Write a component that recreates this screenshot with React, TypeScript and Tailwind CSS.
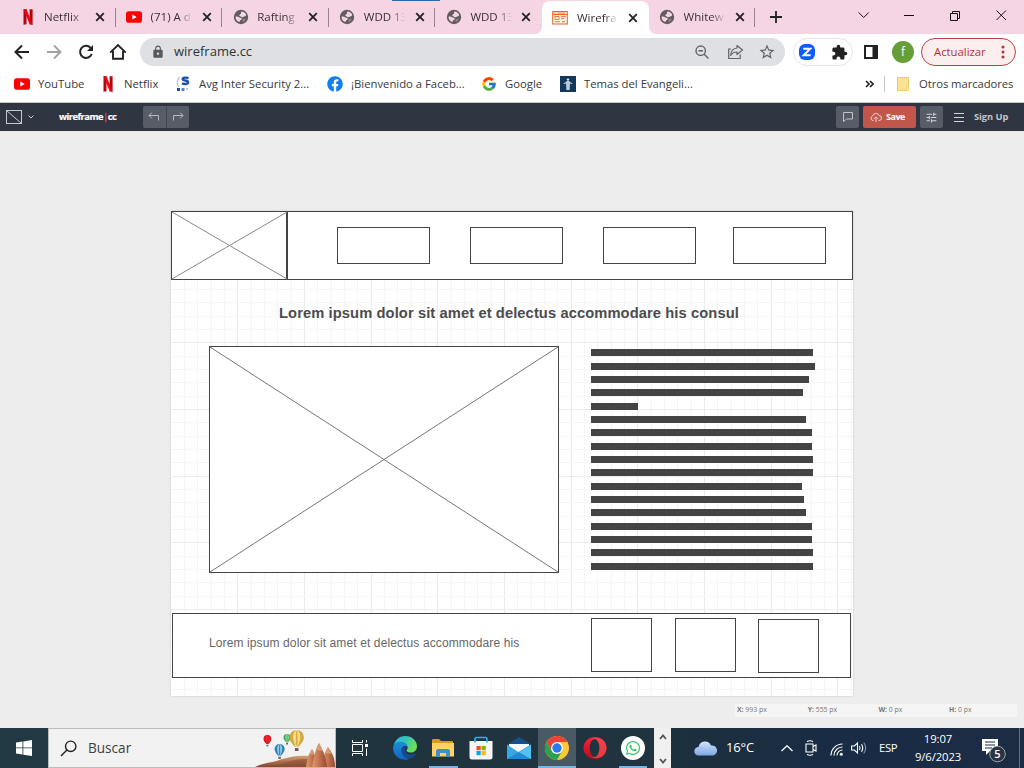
import React from 'react';
import { FcGoogle } from 'react-icons/fc';
import { FaFacebook, FaWhatsapp } from 'react-icons/fa';
import { MdExtension, MdLock, MdStarBorder, MdTune } from 'react-icons/md';

function NetflixIcon() {
  return (
    <svg width="16" height="16" viewBox="0 0 16 16" className="shrink-0">
      <path d="M3.5 0.3h3v15l-3 .4z M9.6 0.3h3v15.4l-3-.4z" fill="#b1060f" />
      <path d="M3.5 0.3h3.1l6 15.4-3-.4z" fill="#e50914" />
    </svg>
  );
}

function YouTubeIcon() {
  return (
    <svg width="16" height="16" viewBox="0 0 16 16" className="shrink-0">
      <rect x="0" y="2.3" width="16" height="11.4" rx="2.8" fill="#f00" />
      <path d="M6.3 5.5v5l4.4-2.5z" fill="#fff" />
    </svg>
  );
}

function GlobeIcon() {
  return (
    <svg width="16" height="16" viewBox="0 0 16 16" className="shrink-0">
      <circle cx="8" cy="8" r="7.200" fill="#625c60" />
      <path d="M8.500 2.600c2 .1 3.800 1.300 4.700 3.100-.2 1-1 1.700-2 1.700-.9.300-1.200 1.100-2.200.9-1-.3-1.200-1.200-2.200-1.400-.8-.3-.6-1.300.2-1.500.8-.2 1-.7 1-1.300 0-.6.100-1.100.5-1.500z" fill="#f5d5e4" />
      <path d="M2.500 7.800c1.300-.6 2.700-.3 3.600.5.800.6 1.900.3 2.500 1 .5.900-.2 1.500-1 1.800-.7.300-.6 1.300-1.200 2C4.100 12.400 2.500 10.500 2.500 7.800z" fill="#f5d5e4" />
      <path d="M9.800 10.300c1.100-.4 2.100-.3 3.100-.5-.5 1.500-1.700 2.700-3.100 3.200-.4-.9-.5-1.900 0-2.700z" fill="#f5d5e4" opacity=".35" />
    </svg>
  );
}

function WireframeIcon() {
  return (
    <svg width="16" height="16" viewBox="0 0 16 16" className="shrink-0" fill="none" stroke="#e2632f">
      <rect x=".7" y="1.500" width="14.600" height="12.500" fill="#fff3e9" strokeWidth="1" />
      <path d="M1 4.500h14" strokeWidth="1.200" />
      <path d="M2 3h1.500M5 3h8" strokeWidth=".8" />
      <rect x="3" y="6.500" width="4" height="3" strokeWidth=".8" />
      <path d="M9 6.700h5M9 8.700h3M3 11.700h5M10 11.700h3" strokeWidth=".9" />
    </svg>
  );
}

function CloseIcon() {
  return (
    <svg width="10" height="10" viewBox="0 0 10 10" className="shrink-0" stroke="#222" strokeWidth="1.800">
      <path d="M1.200 1.200l7.600 7.600M8.800 1.200L1.200 8.800" />
    </svg>
  );
}

type TabProps = { icon: React.ReactNode; title: string; active?: boolean; divider?: boolean };

function Tab({ icon, title, active, divider = true }: TabProps) {
  return (
    <div
      className={
        'relative flex w-[106.600px] shrink-0 items-center pl-[10.500px] ' +
        (active ? 'mt-px h-[33px] rounded-t-[8px] bg-white' : 'h-[34px]')
      }
    >
      {icon}
      <span className="ml-[8.500px] mr-[8.500px] w-[42.500px] overflow-hidden whitespace-nowrap text-[11.500px] text-[#3c3036] [mask-image:linear-gradient(to_right,black_65%,transparent_98%)]">
        {title}
      </span>
      <CloseIcon />
      {divider && <span className="ml-auto h-[19px] w-px bg-[#96848d]" />}
      {active && (
        <>
          <svg className="absolute -left-[7px] bottom-0" width="7" height="7">
            <path d="M7 0v7H0a7 7 0 0 0 7-7z" fill="#fff" />
          </svg>
          <svg className="absolute -right-[7px] bottom-0" width="7" height="7">
            <path d="M0 0v7h7a7 7 0 0 1-7-7z" fill="#fff" />
          </svg>
        </>
      )}
    </div>
  );
}

function TabStrip() {
  return (
    <div className="relative flex h-[34px] items-center bg-[#f5d5e4] pl-[9px]">
      <div className="absolute left-[392px] top-0 h-px w-[48px] bg-[#2b66b5]" />
      <Tab icon={<NetflixIcon />} title="Netflix" />
      <Tab icon={<YouTubeIcon />} title="(71) A d" />
      <Tab icon={<GlobeIcon />} title="Rafting" />
      <Tab icon={<GlobeIcon />} title="WDD 13" />
      <Tab icon={<GlobeIcon />} title="WDD 13" divider={false} />
      <Tab icon={<WireframeIcon />} title="Wirefrar" active divider={false} />
      <Tab icon={<GlobeIcon />} title="Whitewa" />
      <svg className="ml-[15px]" width="12" height="12" stroke="#222" strokeWidth="1.800">
        <path d="M6 0v12M0 6h12" />
      </svg>
      <svg className="ml-auto mr-[17px] mb-[5px]" width="149" height="14" fill="none" stroke="#111" strokeWidth="1">
        <path d="M.7 4.500l5 5 5-5" />
        <path d="M46 7.500h10" />
        <path d="M92.500 5.500h7v7h-7zM94.500 5.500v-2h7v7h-2" />
        <path d="M138.500 2.500l9.500 9.500M148 2.500L138.500 12" />
      </svg>
    </div>
  );
}

function AddressBar() {
  return (
    <div className="flex h-[36px] items-center bg-white">
      <svg className="ml-[14px] shrink-0" width="16" height="16" fill="none" stroke="#222" strokeWidth="2">
        <path d="M15 8H2M8 1.500L1.500 8 8 14.500" />
      </svg>
      <svg className="ml-[16px] shrink-0" width="16" height="16" fill="none" stroke="#a3a3a3" strokeWidth="1.900">
        <path d="M1 8h13M8 1.500L14.500 8 8 14.500" />
      </svg>
      <svg className="ml-[16px] shrink-0" width="16" height="16" fill="none" stroke="#222" strokeWidth="2">
        <path d="M13.700 10A6 6 0 1 1 12.500 3.800" />
        <path d="M15 1v6H9z" fill="#222" stroke="none" />
      </svg>
      <svg className="ml-[15px] shrink-0" width="18" height="18" viewBox="0 0 18 18" fill="none" stroke="#222" strokeWidth="1.900">
        <path d="M1.200 9.600L9 2l7.800 7.600M4 8v7.800h10V8" />
      </svg>
      <div className="ml-[13px] flex h-[28px] w-[645px] shrink-0 items-center rounded-full bg-[#dfe0e3]">
        <MdLock className="ml-[11px]" size={14} color="#55585c" />
        <span className="ml-[9px] text-[13px] text-[#303236]">wireframe.cc</span>
        <svg className="ml-auto" width="14" height="14" fill="none" stroke="#606367" strokeWidth="1.400">
          <circle cx="5.700" cy="5.700" r="4.700" />
          <path d="M9.200 9.200l4.300 4.300M3.500 5.700h4.400" />
        </svg>
        <svg className="ml-[18px]" width="17" height="16" viewBox="0 0 17 16" fill="none" stroke="#606367" strokeWidth="1.200">
          <path d="M4 5H1.700v9.500h11.500v-4" />
          <path d="M10 1.500L15.500 6 10 10.500V8C7 8 5 9 3.700 11.500 4 7 6.500 4.300 10 4z" strokeLinejoin="round" />
        </svg>
        <MdStarBorder className="ml-[14px] mr-[9px]" size={18} color="#606367" />
      </div>
      <div className="ml-[8px] flex h-[28px] w-[60px] shrink-0 items-center rounded-full border border-[#e4e5e8] pl-[5px]">
        <svg width="16" height="16" viewBox="0 0 16 16">
          <rect width="16" height="16" rx="6" fill="#0b5cff" />
          <path d="M4.200 4.700h7L4.700 11.300h7" fill="none" stroke="#fff" strokeWidth="2" />
        </svg>
        <MdExtension className="ml-[16px]" size={17} color="#222" />
      </div>
      <svg className="ml-[11px] shrink-0" width="14" height="14">
        <rect x="1" y="1" width="12" height="12" fill="#fff" stroke="#222" strokeWidth="2" />
        <rect x="8.500" y="1" width="5" height="12" fill="#222" />
      </svg>
      <div className="ml-[14px] flex size-[22px] shrink-0 items-center justify-center rounded-full bg-[#669e37] text-[12px] text-white">f</div>
      <div className="ml-[7px] flex h-[28px] w-[95px] shrink-0 items-center rounded-full border border-[#b84343] bg-[#faeeee] pl-[12px] text-[11.300px] text-[#b53232]">
        Actualizar
        <svg className="ml-auto mr-[10px]" width="4" height="14" fill="#b53232">
          <circle cx="2" cy="2" r="1.500" />
          <circle cx="2" cy="7" r="1.500" />
          <circle cx="2" cy="12" r="1.500" />
        </svg>
      </div>
    </div>
  );
}

function BookmarksBar() {
  return (
    <div className="flex h-[33px] items-center border-b border-[#c9cacd] bg-white pb-[4px] text-[11.300px] whitespace-nowrap text-[#38393c]">
      <div className="ml-[14px] flex w-[86px] items-center gap-[8px]"><YouTubeIcon />YouTube</div>
      <div className="flex w-[75px] items-center gap-[8px]"><NetflixIcon />Netflix</div>
      <div className="flex w-[152px] items-center gap-[8px]">
        <svg width="16" height="16" viewBox="0 0 16 16" className="shrink-0">
          <path d="M4.500 1C2 4 2 8 3.500 11" fill="none" stroke="#a9c3ea" strokeWidth="1.200" />
          <path d="M13.500 2.200c-1.500-.9-5.800-.9-5.800.9 0 2 5.400.8 5.400 3.200 0 2.200-4.200 2-6.200.9" fill="none" stroke="#1f4fa3" strokeWidth="2.400" />
          <path d="M2 12h3v3H2z" fill="#1f4fa3" />
          <path d="M6.500 12h3v3h-3z" fill="#5684c9" />
          <path d="M11 12h2v2h-2z" fill="#b3c9ea" />
        </svg>
        Avg Inter Security 2...
      </div>
      <div className="flex w-[154px] items-center gap-[8px]">
        <FaFacebook size={16} color="#0f7ff0" className="shrink-0" />¡Bienvenido a Faceb...
      </div>
      <div className="flex w-[79px] items-center gap-[8px]"><FcGoogle size={16} className="shrink-0" />Google</div>
      <div className="flex items-center gap-[8px]">
        <svg width="16" height="16" viewBox="0 0 16 16" className="shrink-0">
          <rect width="16" height="16" fill="#12385c" />
          <circle cx="8" cy="3.600" r="1.200" fill="#e7eef4" />
          <path d="M3.500 7.500L7 5h2l3.500 2.500-.5.800-2-1L9.700 14H6.300L6 7.300l-2 1z" fill="#b8cad8" />
        </svg>
        Temas del Evangeli...
      </div>
      <svg className="ml-auto" width="9" height="8" fill="none" stroke="#222" strokeWidth="1.600">
        <path d="M1 1l3 3-3 3M5 1l3 3-3 3" />
      </svg>
      <span className="ml-[10px] h-[16px] w-px bg-[#c4c6c9]" />
      <svg className="ml-[12px]" width="12" height="14">
        <path d="M.5.500h11v9.500h-1v3.500H.5z" fill="#fde293" stroke="#eacb6c" />
        <path d="M9.500 13.500v-4h2v4z" fill="#fff0bb" stroke="#eacb6c" strokeWidth=".8" />
      </svg>
      <span className="ml-[10px] w-[105px] tracking-[-0.080px]">Otros marcadores</span>
    </div>
  );
}

function EditorBar() {
  return (
    <div className="flex h-[28px] items-center bg-[#2f3541] font-bold">
      <svg className="ml-[6px]" width="28" height="16" fill="none" stroke="#c6cad0">
        <rect x=".5" y="1.500" width="15" height="13" />
        <path d="M.5 1.500l15 13" />
        <path d="M22.500 6.500l2.500 2.500 2.500-2.500" />
      </svg>
      <span className="ml-[25px] w-[58px] text-[9.300px] tracking-[-0.500px] whitespace-nowrap text-white [-webkit-text-stroke:0.200px_white]">
        wireframe<span className="font-normal text-[#e0523f] [-webkit-text-stroke:0.300px_#e0523f]">|</span>cc
      </span>
      <div className="ml-[26px] flex h-[22px] w-[46px] gap-px rounded-[2px] bg-[#414651]">
        <div className="flex flex-1 items-center justify-center rounded-l-[2px] bg-[#575c66]">
          <svg width="12" height="10" fill="none" stroke="#b6babf">
            <path d="M4 .5l-3 3 3 3M1 3.500h9.500v5" />
          </svg>
        </div>
        <div className="flex flex-1 items-center justify-center rounded-r-[2px] bg-[#575c66]">
          <svg width="12" height="10" fill="none" stroke="#b6babf">
            <path d="M8 .5l3 3-3 3M11 3.500H1.500v5" />
          </svg>
        </div>
      </div>
      <div className="ml-auto flex h-[22px] w-[23px] items-center justify-center rounded-[2px] bg-[#575c66]">
        <svg width="10" height="10" fill="none" stroke="#c0c4c9">
          <path d="M.5.500h9v6.500h-6L.5 9.500z" />
        </svg>
      </div>
      <div className="ml-[4px] flex h-[22px] w-[53px] items-center rounded-[2px] bg-[#c0574a] pl-[7px] text-[9px] tracking-[-0.500px] text-white">
        <svg width="12" height="10" fill="none" stroke="#f2d3cf" className="mr-[4px]">
          <path d="M3.500 8.500H3A2.300 2.300 0 0 1 2.700 4 3.300 3.300 0 0 1 9 3.500a2.500 2.500 0 0 1 0 5h-.5M6 10V5M4 6.800l2-2 2 2" />
        </svg>
        Save
      </div>
      <div className="ml-[4px] flex h-[22px] w-[23px] items-center justify-center rounded-[2px] bg-[#575c66]">
        <MdTune size={13} color="#d0d3d7" />
      </div>
      <svg className="ml-[11px]" width="10" height="9" stroke="#d0d3d7">
        <path d="M0 .5h10M0 4.500h10M0 8.500h10" />
      </svg>
      <span className="ml-[10px] w-[50px] text-[9.300px] tracking-[-0.050px] whitespace-nowrap text-[#c3c6cb]">Sign Up</span>
    </div>
  );
}

const TEXT_BARS: [number, number][] = [
  [349, 222], [363, 224], [376, 218], [389, 212], [403, 47], [416, 215], [429, 221], [443, 221], [456, 222],
  [469, 222], [483, 211], [496, 213], [509, 215], [523, 221], [536, 221], [549, 222], [563, 222],
];

function Box({ className }: { className: string }) {
  return <div className={'absolute border border-[#444] bg-white ' + className} />;
}

function Grid() {
  const columns = Array.from({ length: 51 }, (_, i) => i + 1);
  const rows = Array.from({ length: 36 }, (_, i) => i + 1);
  return (
    <svg className="absolute inset-0" width="682" height="485" shapeRendering="crispEdges">
      {columns.map((i) => (
        <path key={i} d={`M${Math.round((i * 40) / 3 - 0.500) + 0.500} 0v485`} stroke={i % 5 ? '#f5f5f5' : '#ebebeb'} />
      ))}
      {rows.map((i) => (
        <path key={i} d={`M0 ${Math.round((i * 40) / 3 - 0.900) - 0.500}h682`} stroke={i % 5 ? '#f5f5f5' : '#ebebeb'} />
      ))}
    </svg>
  );
}

function Canvas() {
  return (
    <div className="relative h-[597px] bg-[#ededed] pt-[80px] pl-[171px] font-['Liberation_Sans',Arial,sans-serif]">
      <div className="relative h-[485px] w-[682px] bg-white shadow-[0_0_2px_rgba(0,0,0,0.18)]">
        <Grid />
        <Box className="left-0 top-0 h-[69px] w-[682px]" />
        <Box className="left-0 top-0 h-[69px] w-[117px] border-r-2" />
        <svg className="absolute left-0 top-0" width="116" height="69" stroke="#888">
          <path d="M1 1l115 67M116 1L1 68" />
        </svg>
        <Box className="left-[166px] top-[16px] h-[37px] w-[93px]" />
        <Box className="left-[299px] top-[16px] h-[37px] w-[93px]" />
        <Box className="left-[432px] top-[16px] h-[37px] w-[93px]" />
        <Box className="left-[562px] top-[16px] h-[37px] w-[93px]" />
        <h1 className="absolute left-[108px] top-[93px] text-[14.700px] leading-[18px] font-bold tracking-[0.100px] whitespace-nowrap text-[#4c4c4c]">
          Lorem ipsum dolor sit amet et delectus accommodare his consul
        </h1>
        <Box className="left-[38px] top-[135px] h-[227px] w-[350px]" />
        <svg className="absolute left-[38px] top-[135px]" width="350" height="227" stroke="#777">
          <path d="M1 1l348 225M349 1L1 226" />
        </svg>
        {TEXT_BARS.map(([y, w]) => (
          <div key={y} className="absolute left-[420px] h-[7px] bg-[#444]" style={{ top: y - 211, width: w }} />
        ))}
        <Box className="left-px top-[402px] h-[65px] w-[679px]" />
        <p className="absolute left-[38px] top-[424px] text-[12px] leading-[16px] tracking-[0.115px] whitespace-nowrap text-[#666]">
          Lorem ipsum dolor sit amet et delectus accommodare his
        </p>
        <Box className="left-[420px] top-[407px] h-[54px] w-[61px]" />
        <Box className="left-[504px] top-[407px] h-[54px] w-[61px]" />
        <Box className="left-[587px] top-[408px] h-[54px] w-[61px]" />
      </div>
      <div className="absolute left-[735px] top-[573px] flex h-[13px] w-[282px] items-center bg-[#f5f5f5] pb-px pl-[2px] font-['Open_Sans',sans-serif] text-[6.900px] text-[#777]">
        <span className="mt-px w-[70.700px]"><b>X:</b> 993 px</span>
        <span className="mt-px w-[70.700px]"><b>Y:</b> 555 px</span>
        <span className="mt-px w-[70.700px]"><b>W:</b> 0 px</span>
        <span className="mt-px"><b>H:</b> 0 px</span>
      </div>
    </div>
  );
}

function Balloon({ x, y, s, a, b }: { x: number; y: number; s: number; a: string; b: string }) {
  return (
    <g transform={`translate(${x} ${y}) scale(${s})`}>
      <path d="M0 6a6 6 0 0 1 12 0c0 3.500-3 6-4.500 8h-3C3 12 0 9.500 0 6z" fill={a} />
      <path d="M3 6c0-3 1.300-6 3-6s3 3 3 6-1.500 6-2 8H5C4.500 12 3 9 3 6z" fill={b} />
      <path d="M5.500 1h1l.2 12h-1.400z" fill={a} />
      <path d="M4.500 15h3v2.500h-3z" fill="#75604b" />
    </g>
  );
}

function SearchArt() {
  return (
    <svg className="ml-auto shrink-0" width="80" height="38" viewBox="0 0 80 38">
      <defs>
        <linearGradient id="hill" x1="0" y1="0" x2="0" y2="1">
          <stop offset="0" stopColor="#d4a477" />
          <stop offset="1" stopColor="#83452c" />
        </linearGradient>
        <linearGradient id="rock" x1="0" y1="0" x2="1" y2="0">
          <stop offset="0" stopColor="#e09a6c" />
          <stop offset="1" stopColor="#9c4a2f" />
        </linearGradient>
      </defs>
      <path d="M0 38c10-5 18-4 27-8 10-3 18-4 28-3v11z" fill="url(#hill)" />
      <path d="M22 38c7-5 17-8 31-8v8z" fill="#8d4f33" opacity=".6" />
      <path d="M51 38c1-7 2-12 6-18 3 5 5 11 6 18z" fill="url(#rock)" />
      <path d="M67 38c0-8 2-13 6-20 4 6 7 10 7 20z" fill="url(#rock)" />
      <path d="M57 38c2-10 3-17 7-24 4 7 7 14 8 24z" fill="url(#rock)" />
      <path d="M57 20l3 6-6-1zM64.500 14l3.500 8-7-1zM73 18l3.500 7-7-1z" fill="#e3ab83" opacity=".7" />
      <Balloon x={8.500} y={6} s={0.650} a="#d91525" b="#ee2b35" />
      <Balloon x={19.500} y={15} s={0.850} a="#3482b7" b="#8fc8e8" />
      <Balloon x={28.500} y={5} s={0.600} a="#3ca65a" b="#8cdc98" />
      <Balloon x={34.500} y={1} s={1.200} a="#d2aa43" b="#f4dc83" />
    </svg>
  );
}

function EdgeIcon() {
  return (
    <svg width="24" height="24" viewBox="0 0 24 24">
      <defs>
        <linearGradient id="edgeTop" x1="0" y1="0" x2="1" y2=".4">
          <stop offset="0" stopColor="#2bb3e8" />
          <stop offset=".55" stopColor="#36c7b7" />
          <stop offset="1" stopColor="#6be058" />
        </linearGradient>
        <linearGradient id="edgeSide" x1="0" y1="0" x2="0" y2="1">
          <stop offset="0" stopColor="#1b8fd9" />
          <stop offset="1" stopColor="#1263bd" />
        </linearGradient>
      </defs>
      <path d="M.2 11C1.500 4.500 6 0 12.200 0 19 0 24 5 24 10.200c0 4-3 6.300-6.300 6.300-3 0-4.500-1.200-4.100-2.300 1-1 1.300-2 .8-3.600C13.600 7.600 10.500 6 7.300 6 3.500 6 1 8.500.2 11z" fill="url(#edgeTop)" />
      <path d="M.1 11.800C.8 8 4 5.800 7.500 5.800c3.600 0 6.700 2 7.100 5-1.600-1.500-5.600-.8-6 2.800-.3 4.500 3.400 9 7.600 9.300C8 26 0 20 .1 11.800z" fill="url(#edgeSide)" />
      <path d="M8.700 12.500C7.500 18 12 22.500 16.500 22.700c2.700-.6 5-2.300 6.300-4.700.2-.5-.2-.8-.7-.5-5.100 2.500-10.100 0-10.100-4 0-1.200.5-2 1.100-2.600-1.800-.6-4 .1-4.400 1.600z" fill="#154a8c" />
    </svg>
  );
}

function ExplorerIcon() {
  return (
    <svg width="22" height="18" viewBox="0 0 22 18">
      <path d="M0 1q0-1 1-1h6l2 2h11q1 0 1 1v3H0z" fill="#d99b1c" />
      <path d="M0 4h22v13.500H0z" fill="#fbd462" />
      <path d="M4 18v-6.500l1.500-1.500h11l1.500 1.500V18h-4v-4H8v4z" fill="#3e8fcb" />
    </svg>
  );
}

function StoreIcon() {
  return (
    <svg width="24" height="24" viewBox="0 0 24 24">
      <path d="M.5 5h23v16q0 2.500-2.500 2.500H3Q.5 23.500.5 21z" fill="#f5f5f5" />
      <path d="M6 6.500V3q0-1.500 1.500-1.500h9Q18 1.500 18 3v3.500" fill="none" stroke="#22b6e8" strokeWidth="1.700" />
      <path d="M7.500 10h4.200v4.200H7.500z" fill="#f25022" />
      <path d="M12.600 10h4.200v4.200h-4.200z" fill="#7fba00" />
      <path d="M7.500 15h4.200v4.200H7.500z" fill="#00a4ef" />
      <path d="M12.600 15h4.200v4.200h-4.200z" fill="#ffb900" />
    </svg>
  );
}

function MailIcon() {
  return (
    <svg width="24" height="22" viewBox="0 0 24 22">
      <path d="M0 7.500L12 0l12 7.500z" fill="#164f8d" />
      <path d="M2 7h20v8H2z" fill="#f4f8fc" />
      <path d="M0 7.500l12 8 12-8V22H0z" fill="#34a7e8" />
      <path d="M0 22L24 7.500V22z" fill="#208bd5" />
      <path d="M24 22L9 13.500l3 2 12-8z" fill="#50c2f3" />
    </svg>
  );
}

function ChromeIcon() {
  return (
    <svg width="24" height="24" viewBox="0 0 24 24">
      <circle cx="12" cy="12" r="12" fill="#fcc934" />
      <path d="M12 12V6h10.400A12 12 0 0 0 1.600 6l5.200 9z" fill="#ea4335" />
      <path d="M1.600 6A12 12 0 0 0 12 24l5.200-9L12 12l-5.200 3z" fill="#2da14e" />
      <circle cx="12" cy="12" r="6" fill="#fff" />
      <circle cx="12" cy="12" r="4.700" fill="#2d78ed" />
    </svg>
  );
}

function OperaIcon() {
  return (
    <svg width="24" height="24" viewBox="0 0 24 24">
      <defs>
        <linearGradient id="opera" x1="0" y1="0" x2="0" y2="1">
          <stop offset="0" stopColor="#ff2038" />
          <stop offset="1" stopColor="#b60d20" />
        </linearGradient>
      </defs>
      <ellipse cx="12" cy="12" rx="11.500" ry="11" fill="url(#opera)" />
      <path d="M8 3.500C14-.500 23.500 3 23.500 12S14 24.500 8 20.500c8 2 9-15 0-17z" fill="#f05152" opacity=".7" />
      <ellipse cx="11.500" cy="12" rx="4.900" ry="9" fill="#20343f" />
    </svg>
  );
}

type AppProps = { icon: React.ReactNode; active?: boolean; line?: string };

function TaskApp({ icon, active, line }: AppProps) {
  return (
    <div className={'relative flex h-[40px] w-[38px] shrink-0 items-center justify-center ' + (active ? 'bg-[#4a5a64]' : '')}>
      {icon}
      {line && <span className={'absolute bottom-0 h-[2px] bg-[#76b5e8] ' + line} />}
    </div>
  );
}

function Taskbar() {
  return (
    <div className="flex h-[40px] items-center bg-[#20343f] text-white">
      <div className="flex h-[40px] w-[48px] shrink-0 items-center justify-center bg-[#213943]">
        <svg width="16" height="16" fill="#fff">
          <path d="M0 2.500L6.500 1.500v6H0zM7.300 1.400L16 0v7.500H7.300zM0 8.300h6.500v6.200L0 13.600zM7.300 8.300H16V16l-8.700-1.300z" />
        </svg>
      </div>
      <div className="flex h-[40px] w-[288px] shrink-0 items-center border border-[#bcbcbc] bg-[#f2f2f2]">
        <svg className="ml-[11px]" width="17" height="17" fill="none" stroke="#222" strokeWidth="1.400">
          <circle cx="10.700" cy="6.300" r="5.200" />
          <path d="M6.900 10L1 16" />
        </svg>
        <span className="ml-[11px] text-[13.600px] text-[#404040]">Buscar</span>
        <SearchArt />
      </div>
      <svg className="ml-[16px] shrink-0" width="16" height="16" fill="none" stroke="#fff" strokeWidth="1">
        <path d="M.5 0v2.500h10V0M.5 16v-2.500h10V16M.5 4.500h10v7H.5zM14.500 0v2.500M14.500 8.500V16" />
        <path d="M13 4h3v3h-3z" fill="#fff" stroke="none" />
      </svg>
      <div className="ml-[18px] flex shrink-0">
        <TaskApp icon={<EdgeIcon />} />
        <TaskApp icon={<ExplorerIcon />} line="left-[5px] w-[29px]" />
        <TaskApp icon={<StoreIcon />} />
        <TaskApp icon={<MailIcon />} />
        <TaskApp icon={<ChromeIcon />} active line="left-0 w-[38px]" />
        <TaskApp icon={<OperaIcon />} />
        <TaskApp
          icon={
            <span className="flex size-[24px] items-center justify-center rounded-full bg-white">
              <FaWhatsapp size={16} color="#2fc665" />
            </span>
          }
          line="left-[5px] w-[28px]"
        />
      </div>
      <div className="ml-[2px] flex h-[40px] w-[17px] shrink-0 flex-col items-center justify-between bg-[#f0f0f0] pt-[6px] pb-[4px]">
        <svg width="8" height="6" fill="none" stroke="#555" strokeWidth="1.800"><path d="M1 5l3-3.500L7 5" /></svg>
        <svg width="8" height="6" fill="none" stroke="#555" strokeWidth="1.800"><path d="M1 1l3 3.500L7 1" /></svg>
      </div>
      <div className="flex h-[40px] w-[353px] shrink-0 items-center bg-gradient-to-r from-[#1d303d] via-[#192b45] to-[#1c2c43]">
        <svg className="ml-[23px] shrink-0" width="24" height="16" viewBox="0 0 24 16">
          <defs>
            <linearGradient id="cloud" x1="0" y1="0" x2="0" y2="1">
              <stop offset="0" stopColor="#d5e3fc" />
              <stop offset="1" stopColor="#7ea6e5" />
            </linearGradient>
          </defs>
          <path d="M4.500 15.500a4 4 0 0 1 .1-8.500A6.500 6.500 0 0 1 17 5.500a5 5 0 1 1 2 10z" fill="url(#cloud)" />
        </svg>
        <span className="ml-[8px] w-[31px] text-[13px] tracking-[-0.150px]">16°C</span>
        <svg className="ml-[24px] shrink-0" width="12" height="7" fill="none" stroke="#fff" strokeWidth="1.300">
          <path d="M.5 6L6 .800 11.500 6" />
        </svg>
        <svg className="ml-[12px] shrink-0" width="12" height="16" fill="none" stroke="#fff" strokeWidth="1.100">
          <path d="M1 4h7v8H1zM8 6.500l3-1.500v6L8 9.500M2 1.500q3-1.500 6 0M2 14.500q3 1.500 6 0" />
        </svg>
        <svg className="ml-[13px] mt-[3px] shrink-0" width="13" height="13" fill="none" stroke="#fff" strokeWidth="1.100">
          <path d="M1 12.500A11.500 11.500 0 0 1 12.500 1M4 12.500A8.500 8.500 0 0 1 12.500 4M7 12.500A5.500 5.500 0 0 1 12.500 7" />
          <circle cx="11.300" cy="11.300" r="1.500" fill="#fff" stroke="none" />
        </svg>
        <svg className="ml-[8px] shrink-0" width="16" height="14" fill="none" stroke="#fff" strokeWidth="1.100">
          <path d="M.6 5h2.700L6.500 2v10L3.300 9H.6zM8.500 5q1.200 2 0 4M10.500 3.300q2.500 3.700 0 7.400" />
          <path d="M12.700 1.500q4 5.500 0 11" stroke="#8593a4" />
        </svg>
        <span className="ml-[12px] w-[20px] text-[11.300px] tracking-[-0.400px]">ESP</span>
        <div className="ml-[12px] flex w-[54px] shrink-0 flex-col items-center pb-px text-[11.300px] leading-[18px] tracking-[-0.100px] whitespace-nowrap">
          <span>19:07</span>
          <span>9/6/2023</span>
        </div>
        <svg className="ml-[16px] shrink-0 mt-[3px]" width="26" height="26" viewBox="0 0 26 26">
          <path d="M1 2h16v12H9l-4 4v-4H1z" fill="#fff" />
          <path d="M4 5h10M4 8h10M4 11h7" stroke="#1b2b43" strokeWidth="1.200" />
          <circle cx="16.500" cy="17" r="7.800" fill="#2a3440" stroke="#9ca5ae" strokeWidth="1" />
          <text x="16.500" y="21" textAnchor="middle" fill="#fff" fontSize="11" fontWeight="600" fontFamily="Open Sans">5</text>
        </svg>
        <span className="ml-auto mr-[4px] h-[40px] w-px bg-[#647184]" />
      </div>
    </div>
  );
}

export default function App() {
  return (
    <div className="h-[768px] w-[1024px] overflow-hidden bg-[#ededed] font-['Open_Sans','Noto_Sans',sans-serif]">
      <TabStrip />
      <AddressBar />
      <BookmarksBar />
      <EditorBar />
      <Canvas />
      <Taskbar />
    </div>
  );
}
